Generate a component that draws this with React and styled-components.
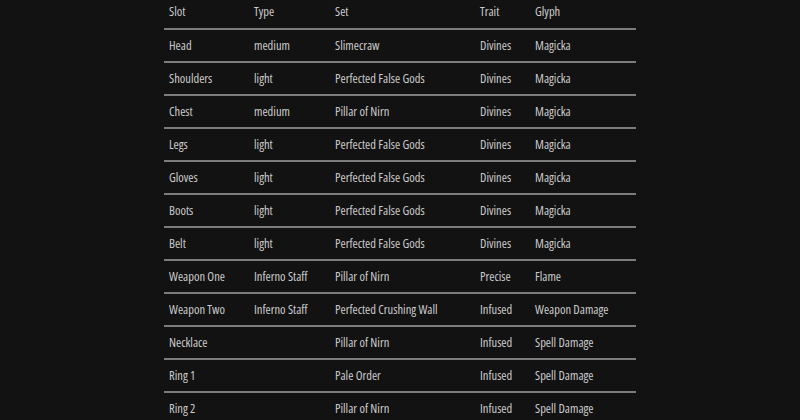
import React from "react";
import styled, { createGlobalStyle } from "styled-components";

const Global = createGlobalStyle`
  html, body { margin: 0; padding: 0; background: #121212; }
  body { font-family: "Open Sans", "Noto Sans", sans-serif; }
`;

const Page = styled.div`
  display: flex;
  justify-content: center;
  min-height: 420px;
  background: #121212;
`;

const Table = styled.div`
  width: 472px;
  display: flex;
  flex-direction: column;
`;

const Row = styled.div`
  display: grid;
  grid-template-columns: 85px 81px 145px 55px 106px;
  align-items: center;
  height: ${(p) => (p.$head ? "30px" : "33px")};
  padding-bottom: ${(p) => (p.$head ? "5px" : "0")};
  box-sizing: border-box;
  border-bottom: 2px solid #7c7c7c;
`;

const Cell = styled.div`
  padding-left: 5px;
  font-size: 12.5px;
  font-stretch: 87.5%;
  color: #cbcbcb;
  white-space: nowrap;
`;

const cols = ["Slot", "Type", "Set", "Trait", "Glyph"];
const rows = [
  ["Head", "medium", "Slimecraw", "Divines", "Magicka"],
  ["Shoulders", "light", "Perfected False Gods", "Divines", "Magicka"],
  ["Chest", "medium", "Pillar of Nirn", "Divines", "Magicka"],
  ["Legs", "light", "Perfected False Gods", "Divines", "Magicka"],
  ["Gloves", "light", "Perfected False Gods", "Divines", "Magicka"],
  ["Boots", "light", "Perfected False Gods", "Divines", "Magicka"],
  ["Belt", "light", "Perfected False Gods", "Divines", "Magicka"],
  ["Weapon One", "Inferno Staff", "Pillar of Nirn", "Precise", "Flame"],
  ["Weapon Two", "Inferno Staff", "Perfected Crushing Wall", "Infused", "Weapon Damage"],
  ["Necklace", "", "Pillar of Nirn", "Infused", "Spell Damage"],
  ["Ring 1", "", "Pale Order", "Infused", "Spell Damage"],
  ["Ring 2", "", "Pillar of Nirn", "Infused", "Spell Damage"],
];

export default function App() {
  return (
    <>
      <Global />
      <Page>
        <Table>
          <Row $head>
            {cols.map((c) => (
              <Cell key={c}>{c}</Cell>
            ))}
          </Row>
          {rows.map((r, i) => (
            <Row key={i}>
              {r.map((c, j) => (
                <Cell key={j}>{c}</Cell>
              ))}
            </Row>
          ))}
        </Table>
      </Page>
    </>
  );
}
